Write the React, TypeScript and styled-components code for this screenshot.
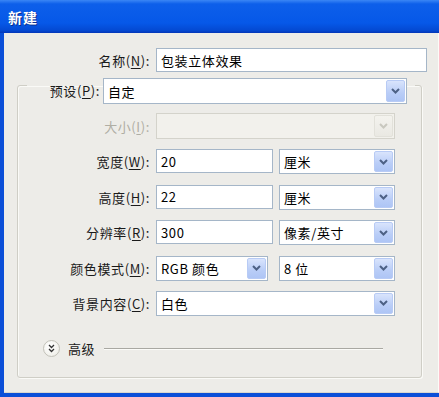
import React from 'react';
import styled, { createGlobalStyle } from 'styled-components';

const GlobalStyle = createGlobalStyle`
  html, body {
    margin: 0;
    padding: 0;
    background: #ffffff;
  }
  body {
    font-family: "Noto Sans CJK SC", "Liberation Sans", sans-serif;
    font-size: 13px;
    letter-spacing: 0.6px;
    color: #000;
  }
`;

const Window = styled.div`
  width: 439px;
  height: 397px;
  display: flex;
  flex-direction: column;
  background: #0b4fd8;
  overflow: hidden;
`;

const TitleBar = styled.div`
  height: 33px;
  flex: none;
  display: flex;
  align-items: center;
  padding-left: 8px;
  background: linear-gradient(#3a86f5 0%, #0d5fea 12%, #0658e8 70%, #0449d2 92%, #0336b8 100%);
  color: #fff;
  font-weight: bold;
  font-size: 14px;
  letter-spacing: 1px;
  text-shadow: 1px 1px 0 #0a2f8f;
`;

const Client = styled.div`
  flex: 1;
  margin: 0 0 4px 4px;
  background: #edece8;
  border-right: 1px solid #fbfbf8;
  border-bottom: 1px solid #d8d7d0;
  padding-top: 15px;
  display: flex;
  flex-direction: column;
`;

const NameRow = styled.div`
  display: grid;
  grid-template-columns: 146px 1fr;
  column-gap: 6px;
  align-items: center;
  padding-right: 11px;
  height: 24px;
`;

const Label = styled.label<{ $disabled?: boolean }>`
  text-align: right;
  white-space: nowrap;
  color: ${(p) => (p.$disabled ? '#b0aea4' : '#1a1a1a')};
  u {
    text-underline-offset: 2px;
  }
`;

const TextBox = styled.div<{ $w?: number }>`
  height: 24px;
  box-sizing: border-box;
  width: ${(p) => (p.$w ? `${p.$w}px` : '100%')};
  border: 1px solid #a5b6c8;
  background: #fff;
  display: flex;
  align-items: center;
  padding-left: 4px;
  white-space: nowrap;
`;

const Group = styled.fieldset`
  margin: 6px 16px 0 13px;
  padding: 21px 0 19px 0;
  min-width: 0;
  border: 1px solid #cfcec6;
  border-radius: 3px;
  box-shadow: inset 1px 1px 0 #fafaf7, 1px 1px 0 #fafaf7;
`;

const Legend = styled.legend`
  margin-left: 9px;
  padding: 0 8px 0 0;
  width: 388px;
  box-sizing: border-box;
  height: 14px;
  display: flex;
  align-items: flex-start;
  gap: 3px;
  overflow: visible;
`;

const PresetLabel = styled(Label)`
  width: 73px;
  line-height: 26px;
`;

const Rows = styled.div`
  display: grid;
  grid-template-columns: 132px 239px;
  column-gap: 6px;
  row-gap: 10.4px;
  align-items: center;
`;

const Pair = styled.div<{ $gap: number }>`
  display: flex;
  gap: ${(p) => p.$gap}px;
`;

const ComboBox = styled.div<{ $w?: number; $h?: number; $disabled?: boolean }>`
  width: ${(p) => (p.$w ? `${p.$w}px` : '100%')};
  height: ${(p) => p.$h ?? 25}px;
  box-sizing: border-box;
  flex: none;
  border: 1px solid ${(p) => (p.$disabled ? '#d4d3cb' : '#a5b6c8')};
  background: ${(p) => (p.$disabled ? '#f2f1ec' : '#fff')};
  display: flex;
  align-items: stretch;
  padding: 1px;
`;

const ComboValue = styled.div`
  flex: 1;
  display: flex;
  align-items: center;
  padding-left: 3px;
  white-space: nowrap;
`;

const ArrowBtn = styled.div<{ $disabled?: boolean }>`
  width: 17px;
  flex: none;
  display: flex;
  align-items: center;
  justify-content: center;
  border-radius: 2px;
  background: ${(p) =>
    p.$disabled
      ? 'linear-gradient(#f4f3ee, #eae9e3)'
      : 'linear-gradient(#d9e4fc, #b9cdf7 60%, #aec5f5)'};
  border: 1px solid ${(p) => (p.$disabled ? '#e2e1da' : '#b8cbf5')};
  color: ${(p) => (p.$disabled ? '#c9c8bf' : '#4d6185')};
`;

const AdvancedRow = styled.div`
  margin-top: 24px;
  height: 18px;
  display: flex;
  align-items: center;
  padding: 0 38px 0 25px;
`;

const RoundBtn = styled.div`
  width: 17px;
  height: 17px;
  box-sizing: border-box;
  border-radius: 50%;
  border: 1px solid #c2c1b8;
  background: radial-gradient(circle at 40% 35%, #ffffff, #ecebe4);
  display: flex;
  align-items: center;
  justify-content: center;
  color: #333;
`;

const AdvText = styled.span`
  margin-left: 8px;
  color: #1a1a1a;
`;

const Rule = styled.div`
  flex: 1;
  margin-left: 9px;
  border-top: 1px solid #a9a8a2;
  border-bottom: 1px solid #fbfbf8;
`;

function Chevron() {
  return (
    <svg width="9" height="6" viewBox="0 0 9 6">
      <path d="M1 1 L4.5 4.5 L8 1" fill="none" stroke="currentColor" strokeWidth="2" />
    </svg>
  );
}

function Combo({
  value,
  w,
  h,
  disabled,
}: {
  value?: string;
  w?: number;
  h?: number;
  disabled?: boolean;
}) {
  return (
    <ComboBox $w={w} $h={h} $disabled={disabled}>
      <ComboValue>{value}</ComboValue>
      <ArrowBtn $disabled={disabled}>
        <Chevron />
      </ArrowBtn>
    </ComboBox>
  );
}

function Mn({ text, k }: { text: string; k: string }) {
  return (
    <>
      {text}(<u>{k}</u>):
    </>
  );
}

export default function App() {
  return (
    <>
      <GlobalStyle />
      <Window>
        <TitleBar>新建</TitleBar>
        <Client>
          <NameRow>
            <Label>
              <Mn text="名称" k="N" />
            </Label>
            <TextBox>包装立体效果</TextBox>
          </NameRow>

          <Group>
            <Legend>
              <PresetLabel>
                <Mn text="预设" k="P" />
              </PresetLabel>
              <Combo value="自定" w={304} h={26} />
            </Legend>

            <Rows>
              <Label $disabled>
                <Mn text="大小" k="I" />
              </Label>
              <Combo disabled h={26} />

              <Label>
                <Mn text="宽度" k="W" />
              </Label>
              <Pair $gap={6}>
                <TextBox $w={117}>20</TextBox>
                <Combo value="厘米" w={116} />
              </Pair>

              <Label>
                <Mn text="高度" k="H" />
              </Label>
              <Pair $gap={6}>
                <TextBox $w={117}>22</TextBox>
                <Combo value="厘米" w={116} />
              </Pair>

              <Label>
                <Mn text="分辨率" k="R" />
              </Label>
              <Pair $gap={6}>
                <TextBox $w={117}>300</TextBox>
                <Combo value="像素/英寸" w={116} />
              </Pair>

              <Label>
                <Mn text="颜色模式" k="M" />
              </Label>
              <Pair $gap={11}>
                <Combo value="RGB 颜色" w={112} />
                <Combo value="8 位" w={116} />
              </Pair>

              <Label>
                <Mn text="背景内容" k="C" />
              </Label>
              <Combo value="白色" />
            </Rows>

            <AdvancedRow>
              <RoundBtn>
                <svg width="7" height="9" viewBox="0 0 7 9">
                  <path
                    d="M1 1 L3.5 3.5 L6 1 M1 5 L3.5 7.5 L6 5"
                    fill="none"
                    stroke="currentColor"
                    strokeWidth="1.3"
                  />
                </svg>
              </RoundBtn>
              <AdvText>高级</AdvText>
              <Rule />
            </AdvancedRow>
          </Group>
        </Client>
      </Window>
    </>
  );
}
